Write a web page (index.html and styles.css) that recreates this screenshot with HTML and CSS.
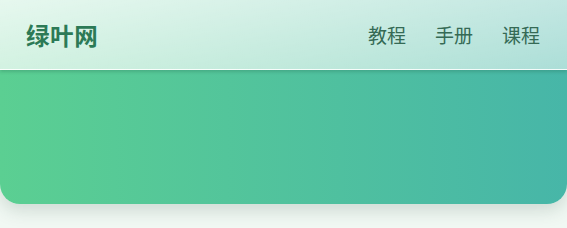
FILE: index.html
```html
<!DOCTYPE html>
<html lang="zh-CN">
<head>
    <meta charset="UTF-8">
    <meta name="viewport" content="width=device-width, initial-scale=1.0">
    <title>绿叶网</title>
    <link rel="stylesheet" href="styles.css">
</head>
<body>

    <!-- Hauptkarte mit Verlauf -->
    <div class="card">
        <header class="top-bar">
            <div class="logo">绿叶网</div>
            <nav class="nav">
                <a href="#">教程</a>
                <a href="#">手册</a>
                <a href="#">课程</a>
            </nav>
        </header>
        <div class="card-body"></div>
    </div>

</body>
</html>
```

FILE: styles.css
```css
body {
    font-family: "Noto Sans CJK SC", "Noto Sans", sans-serif;
    background-color: #f1f8f3;
    margin: 0;
    padding: 0;
    height: 228px;
    overflow: hidden;
}

.card {
    background: linear-gradient(90deg, #5bcf92, #47b6a8);
    border-radius: 0 0 20px 20px;
    box-shadow: 0 6px 18px rgba(40, 80, 60, 0.18);
    height: 204px;
    overflow: hidden;
}

.top-bar {
    display: flex;
    justify-content: space-between;
    align-items: center;
    height: 69px;
    padding: 0 27px 0 26px;
    background: linear-gradient(170deg, rgba(255, 255, 255, 0.85), rgba(255, 255, 255, 0.55));
    border-bottom: 1px solid rgba(255, 255, 255, 0.8);
    box-shadow: 0 2px 3px rgba(30, 100, 70, 0.25);
}

.logo {
    font-size: 23.5px;
    font-weight: bold;
    color: #2c7a56;
    letter-spacing: 0.6px;
}

.nav {
    display: flex;
    gap: 29px;
}

.nav a {
    font-size: 19px;
    color: #356a55;
    text-decoration: none;
}
```
